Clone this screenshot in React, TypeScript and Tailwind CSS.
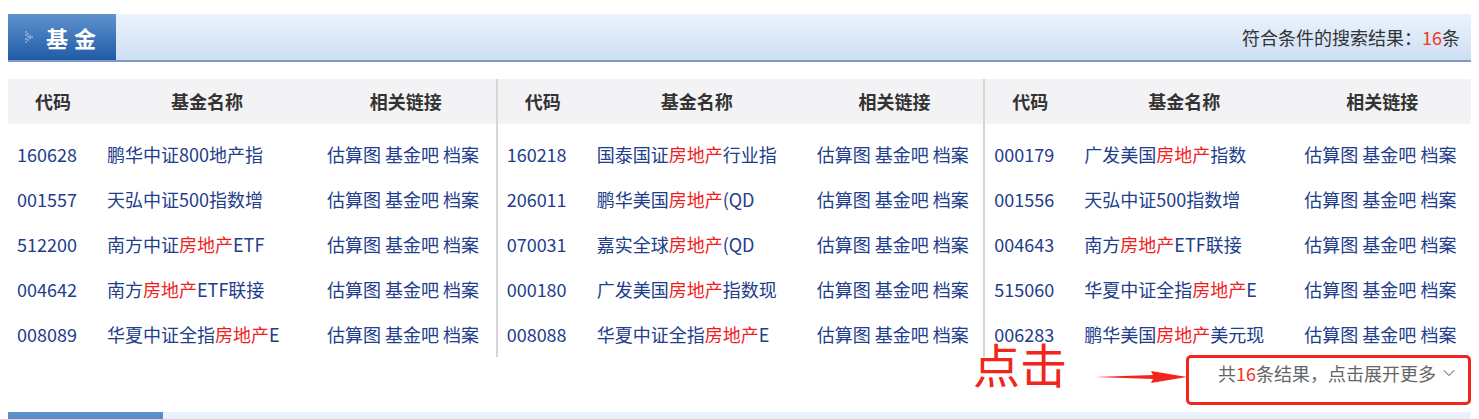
import React from 'react'
import { ChevronDown } from 'lucide-react'

type Fund = { code: string; name: [string, string, string] }

const groups: Fund[][] = [
  [
    { code: '160628', name: ['鹏华中证800地产指', '', ''] },
    { code: '001557', name: ['天弘中证500指数增', '', ''] },
    { code: '512200', name: ['南方中证', '房地产', 'ETF'] },
    { code: '004642', name: ['南方', '房地产', 'ETF联接'] },
    { code: '008089', name: ['华夏中证全指', '房地产', 'E'] },
  ],
  [
    { code: '160218', name: ['国泰国证', '房地产', '行业指'] },
    { code: '206011', name: ['鹏华美国', '房地产', '(QD'] },
    { code: '070031', name: ['嘉实全球', '房地产', '(QD'] },
    { code: '000180', name: ['广发美国', '房地产', '指数现'] },
    { code: '008088', name: ['华夏中证全指', '房地产', 'E'] },
  ],
  [
    { code: '000179', name: ['广发美国', '房地产', '指数'] },
    { code: '001556', name: ['天弘中证500指数增', '', ''] },
    { code: '004643', name: ['南方', '房地产', 'ETF联接'] },
    { code: '515060', name: ['华夏中证全指', '房地产', 'E'] },
    { code: '006283', name: ['鹏华美国', '房地产', '美元现'] },
  ],
]

const font = { fontFamily: '"Microsoft YaHei", "Noto Sans CJK SC", "Noto Sans", sans-serif' }

function TabIcon() {
  return (
    <svg width="10" height="12" viewBox="0 0 10 12" className="shrink-0">
      {[
        [1, 1], [3, 3], [5, 5], [7, 6], [5, 7], [3, 9], [1, 11],
        [1, 4], [3, 6], [1, 8],
      ].map(([x, y], i) => (
        <circle key={i} cx={x} cy={y} r="0.8" fill="#c9dcf2" />
      ))}
    </svg>
  )
}

function FundGroup({ funds, first }: { funds: Fund[]; first: boolean }) {
  return (
    <div className={first ? '' : 'border-l-2 border-[#d6d6d6]'}>
      {/* Column headers */}
      <div className="grid grid-cols-[90px_218px_1fr] h-[45px] items-center bg-[#f3f3f5] text-[18px] font-bold text-[#333]">
        <div className="text-center">代码</div>
        <div className="text-center">基金名称</div>
        <div className="text-center">相关链接</div>
      </div>

      {/* Rows */}
      <div className="pt-[8px]">
        {funds.map((f) => (
          <div
            key={f.code}
            className="grid grid-cols-[90px_218px_1fr] h-[45px] items-center text-[18px] text-[#223d8b] whitespace-nowrap"
          >
            <div className="pl-[9px]">{f.code}</div>
            <div className="pl-[9px]">
              {f.name[0]}
              <span className="text-[#f01e1e]">{f.name[1]}</span>
              {f.name[2]}
            </div>
            <div className="pl-[11px]">估算图 基金吧 档案</div>
          </div>
        ))}
      </div>
    </div>
  )
}

export default function App() {
  return (
    <div className="h-[419px] overflow-hidden bg-white pt-[14px] px-[8px]" style={font}>
      {/* Title bar */}
      <div className="flex h-[48px] border-b-2 border-[#7f98c9] bg-gradient-to-b from-[#eaf3fd] to-[#cddff3]">
        <div className="flex w-[108px] items-center gap-[11px] pl-[17px] bg-gradient-to-b from-[#5f92cf] to-[#1f5ba6]">
          <TabIcon />
          <span className="text-[22px] font-bold tracking-[6px] text-white">基金</span>
        </div>
        <div className="flex flex-1 items-center justify-end pr-[11px] text-[18px] text-[#333]">
          符合条件的搜索结果：<span className="text-[#ee3a1c]">16</span>条
        </div>
      </div>

      {/* Result table */}
      <div className="mt-[17px] grid grid-cols-3">
        {groups.map((g, i) => (
          <FundGroup key={i} funds={g} first={i === 0} />
        ))}
      </div>

      {/* Expand footer */}
      <div className="relative flex h-[55px] justify-end pt-[5px] pr-[12px]">
        <div className="flex h-[22px] items-center text-[18px] text-[#666]">
          共<span className="text-[#ee3a1c]">16</span>条结果，点击展开更多
          <ChevronDown size={20} strokeWidth={1.3} className="ml-[3px] text-[#999]" />
        </div>

        {/* annotation overlay */}
        <div className="absolute left-[965px] top-[-18px] text-[47px] leading-none text-[#f2241b]">点击</div>
        <svg className="absolute left-[1087px] top-[13px]" width="92" height="14" viewBox="0 0 92 14">
          <polygon points="0,7 58,5 56,1 92,7 56,13 58,9" fill="#f2241b" />
        </svg>
        <div className="absolute right-0 top-[-2px] h-[50px] w-[285px] rounded-[5px] border-[3px] border-[#f2241b]" />
      </div>

      {/* Next section bar (cut off) */}
      <div className="flex h-[48px] bg-gradient-to-b from-[#eaf3fd] to-[#cddff3]">
        <div className="w-[155px] bg-gradient-to-b from-[#5f92cf] to-[#1f5ba6]" />
      </div>
    </div>
  )
}
